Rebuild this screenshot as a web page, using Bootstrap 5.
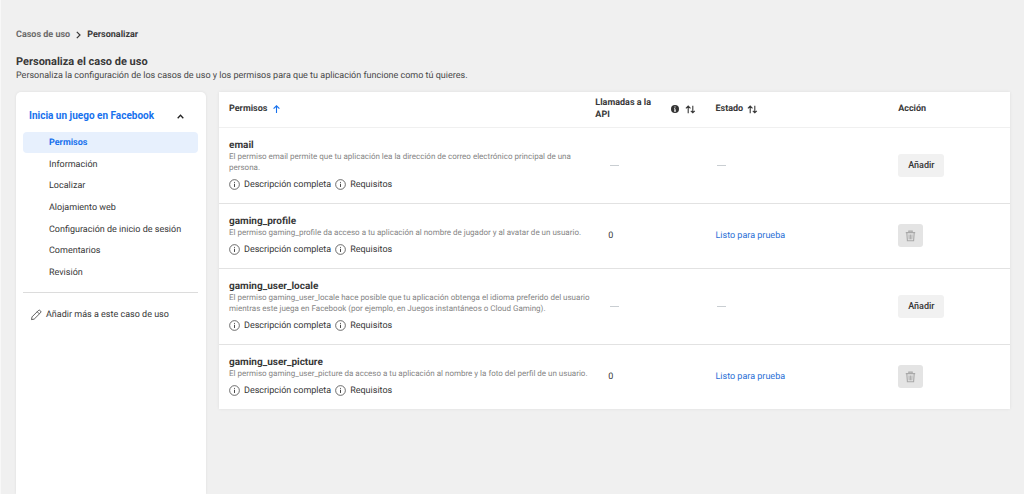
<!DOCTYPE html>
<html lang="es">
<head>
<meta charset="utf-8">
<meta name="viewport" content="width=device-width, initial-scale=1">
<title>Personaliza el caso de uso</title>
<link href="https://cdn.jsdelivr.net/npm/bootstrap@5.3.0/dist/css/bootstrap.min.css" rel="stylesheet">
<style>
  body { font-family: Roboto, "Liberation Sans", sans-serif; font-size: 9px; line-height: 12px; color: #383838; background: #f0f0f0; text-rendering: geometricPrecision; }
  a { text-decoration: none; color: inherit; }
  svg { fill: none; stroke: currentColor; flex: none; display: block; }
  .blue { color: #1771ed; }
  .page { padding: 29px 14px 0 15px; border-left: 1px solid #f8f8f8; height: 100vh; overflow: hidden; }
  .crumbs { gap: 6px; font-weight: 700; color: #6a6a6a; margin-bottom: 14px; }
  .crumbs span, .crumbs svg { color: #383838; }
  .page-title { font-size: 11px; line-height: 14px; font-weight: 700; margin: 0; }
  .intro { margin: 1px 0 10px; color: #484848; }
  .layout { gap: 13px; }
  .panel { background: #fff; box-shadow: 0 0 3px rgba(0,0,0,.08); }
  .side { flex: 0 0 190px; border-radius: 5px 5px 0 0; padding: 16px 8px 0 7px; }
  .side-head { background: none; border: 0; padding: 0 22px 0 6px; color: #1771ed; font-size: 10px; line-height: 16px; font-weight: 700; margin-bottom: 8px; }
  .side-head svg { color: #222; margin-right: -8px; }
  .side-links { height: 151px; margin: 0; }
  .side-links a { display: block; line-height: 20px; padding: 1px 0 0 26px; border-radius: 4px; }
  .side-links a.active { background: #e7f0fd; color: #1771ed; font-weight: 700; }
  .side-more { border-top: 1px solid #dcdcdc; margin-top: 9px; padding: 16px 0 0 7px; gap: 4px; }
  .perms { width: 100%; table-layout: fixed; margin: 0; }
  .perms th { height: 35px; padding: 0 10px; font-weight: 700; }
  .perms th.api-head { padding: 0 9px 0 3px; }
  .perms td { padding: 0 10px; border-top: 1px solid #e2e2e2; vertical-align: middle; }
  .perms td:first-child { padding: 12px 0 12px 10px; }
  .perms tbody tr:first-child td { border-top-color: #f0f0f0; }
  .perms td.api-value { padding-left: 16px; }
  .c-name { width: 47.2%; } .c-api { width: 14.3%; } .c-state { width: 23.1%; }
  .api-label { width: 60px; }
  .sort-gap { gap: 6px; }
  .perm-name { font-size: 10px; line-height: 11px; font-weight: 700; margin: 0; }
  .perm-text { font-size: 8px; line-height: 11px; color: #858585; margin: 0 0 6px; }
  .info-links, .info-links a { gap: 4px; }
  .dash { width: 9px; height: 1px; background: #c9ced2; margin-left: 2px; }
  .state-link { color: #2a6fd6; }
  .act { border: 0; border-radius: 3px; height: 23px; background: #f1f1f1; color: #333; font-weight: 500; padding: 0 10px; vertical-align: middle; }
  .act-icon { background: #e4e4e4; color: #a8a8a8; padding: 0 7px; }
</style>
</head>
<body>
<svg width="0" height="0" class="position-absolute" aria-hidden="true">
  <symbol id="info" viewBox="0 0 12 12"><circle cx="6" cy="6" r="5.300" stroke-width=".8"/><path d="M6 5.200V8.700" stroke-width="1"/><path d="M6 3.200V4.200" stroke-width="1"/></symbol>
  <symbol id="sort" viewBox="0 0 11 9"><path d="M3.200 8.200V1.200M.9 3.300 3.200 1l2.300 2.300M7.800.8v7M5.800 5.800l2 2 2-2" stroke-width="1.1"/></symbol>
  <symbol id="trash" viewBox="0 0 10 12"><path d="M.3 2.600h9.400M3.300 2.400V1.100h3.400v1.300M1.300 2.800l.6 8h6.200l.6-8" stroke-width="1.100"/><path d="M3.500 4.500l.2 4.800M5 4.500v4.800M6.500 4.500l-.2 4.800" stroke-width=".9"/></symbol>
</svg>
<main class="page d-flex flex-column">
  <nav class="crumbs d-flex align-items-center" aria-label="Ruta">
    <a href="#">Casos de uso</a>
    <svg width="5" height="8" viewBox="0 0 5 8" stroke-width="1.2"><path d="m.8.8 3.200 3.200L.8 7.200"/></svg>
    <span>Personalizar</span>
  </nav>
  <h1 class="page-title">Personaliza el caso de uso</h1>
  <p class="intro">Personaliza la configuración de los casos de uso y los permisos para que tu aplicación funcione como tú quieres.</p>
  <div class="layout d-flex align-items-start flex-grow-1">
    <aside class="side panel align-self-stretch">
      <button type="button" class="side-head d-flex w-100 justify-content-between align-items-center">Inicia un juego en Facebook
        <svg width="7" height="5" viewBox="0 0 7 5" stroke-width="1.3"><path d="M.7 4.200 3.500 1.300l2.800 2.900"/></svg>
      </button>
      <ul class="side-links list-unstyled d-flex flex-column justify-content-between">
        <li><a class="active" href="#">Permisos</a></li>
        <li><a href="#">Información</a></li>
        <li><a href="#">Localizar</a></li>
        <li><a href="#">Alojamiento web</a></li>
        <li><a href="#">Configuración de inicio de sesión</a></li>
        <li><a href="#">Comentarios</a></li>
        <li><a href="#">Revisión</a></li>
      </ul>
      <a href="#" class="side-more d-flex align-items-center">
        <svg width="12" height="12" viewBox="0 0 12 12" stroke-width=".8" stroke-linejoin="round"><path d="M1.500 10.600 2 7.900 8.300 1.600a1.300 1.300 0 0 1 1.900 0l.3.300a1.300 1.300 0 0 1 0 1.900L4.200 10.100zM7.200 2.700l2.200 2.200"/></svg>
        Añadir más a este caso de uso</a>
    </aside>
    <section class="panel flex-grow-1">
      <table class="perms">
        <colgroup><col class="c-name"><col class="c-api"><col class="c-state"><col></colgroup>
        <thead>
          <tr>
            <th scope="col"><div class="d-flex align-items-center sort-gap">Permisos
              <svg class="blue" width="7" height="8" viewBox="0 0 7 8" stroke-width="1.1"><path d="M3.500 8V1M.6 3.700l2.900-2.900 2.900 2.900"/></svg></div></th>
            <th scope="col" class="api-head"><div class="d-flex align-items-center justify-content-between"><span class="api-label">Llamadas a la API</span>
              <span class="d-flex align-items-center sort-gap">
                <svg width="8" height="8" viewBox="0 0 8 8"><circle cx="4" cy="4" r="4" fill="#333" stroke="none"/><path d="M4 1.400v1.100M3.200 3.700H4v2.300M3 6.100h2" stroke="#fff" stroke-width="1"/></svg>
                <svg width="11" height="9"><use href="#sort"/></svg></span></div></th>
            <th scope="col"><div class="d-flex align-items-center gap-1">Estado <svg width="11" height="9"><use href="#sort"/></svg></div></th>
            <th scope="col">Acción</th>
          </tr>
        </thead>
        <tbody>
          <tr>
            <td><h2 class="perm-name">email</h2>
              <p class="perm-text">El permiso email permite que tu aplicación lea la dirección de correo electrónico principal de una persona.</p>
              <div class="info-links d-flex"><a href="#" class="d-flex align-items-center"><svg width="11" height="11"><use href="#info"/></svg>Descripción completa</a><a href="#" class="d-flex align-items-center"><svg width="11" height="11"><use href="#info"/></svg>Requisitos</a></div></td>
            <td class="api-value"><div class="dash"></div></td><td><div class="dash"></div></td>
            <td><button type="button" class="act">Añadir</button></td>
          </tr>
          <tr>
            <td><h2 class="perm-name">gaming_profile</h2>
              <p class="perm-text">El permiso gaming_profile da acceso a tu aplicación al nombre de jugador y al avatar de un usuario.</p>
              <div class="info-links d-flex"><a href="#" class="d-flex align-items-center"><svg width="11" height="11"><use href="#info"/></svg>Descripción completa</a><a href="#" class="d-flex align-items-center"><svg width="11" height="11"><use href="#info"/></svg>Requisitos</a></div></td>
            <td class="api-value">0</td><td><a href="#" class="state-link">Listo para prueba</a></td>
            <td><button type="button" class="act act-icon" aria-label="Eliminar"><svg width="11" height="12"><use href="#trash"/></svg></button></td>
          </tr>
          <tr>
            <td><h2 class="perm-name">gaming_user_locale</h2>
              <p class="perm-text">El permiso gaming_user_locale hace posible que tu aplicación obtenga el idioma preferido del usuario mientras este juega en Facebook (por ejemplo, en Juegos instantáneos o Cloud Gaming).</p>
              <div class="info-links d-flex"><a href="#" class="d-flex align-items-center"><svg width="11" height="11"><use href="#info"/></svg>Descripción completa</a><a href="#" class="d-flex align-items-center"><svg width="11" height="11"><use href="#info"/></svg>Requisitos</a></div></td>
            <td class="api-value"><div class="dash"></div></td><td><div class="dash"></div></td>
            <td><button type="button" class="act">Añadir</button></td>
          </tr>
          <tr>
            <td><h2 class="perm-name">gaming_user_picture</h2>
              <p class="perm-text">El permiso gaming_user_picture da acceso a tu aplicación al nombre y la foto del perfil de un usuario.</p>
              <div class="info-links d-flex"><a href="#" class="d-flex align-items-center"><svg width="11" height="11"><use href="#info"/></svg>Descripción completa</a><a href="#" class="d-flex align-items-center"><svg width="11" height="11"><use href="#info"/></svg>Requisitos</a></div></td>
            <td class="api-value">0</td><td><a href="#" class="state-link">Listo para prueba</a></td>
            <td><button type="button" class="act act-icon" aria-label="Eliminar"><svg width="11" height="12"><use href="#trash"/></svg></button></td>
          </tr>
        </tbody>
      </table>
    </section>
  </div>
</main>
<script src="https://cdn.jsdelivr.net/npm/bootstrap@5.3.0/dist/js/bootstrap.bundle.min.js"></script>
</body>
</html>
